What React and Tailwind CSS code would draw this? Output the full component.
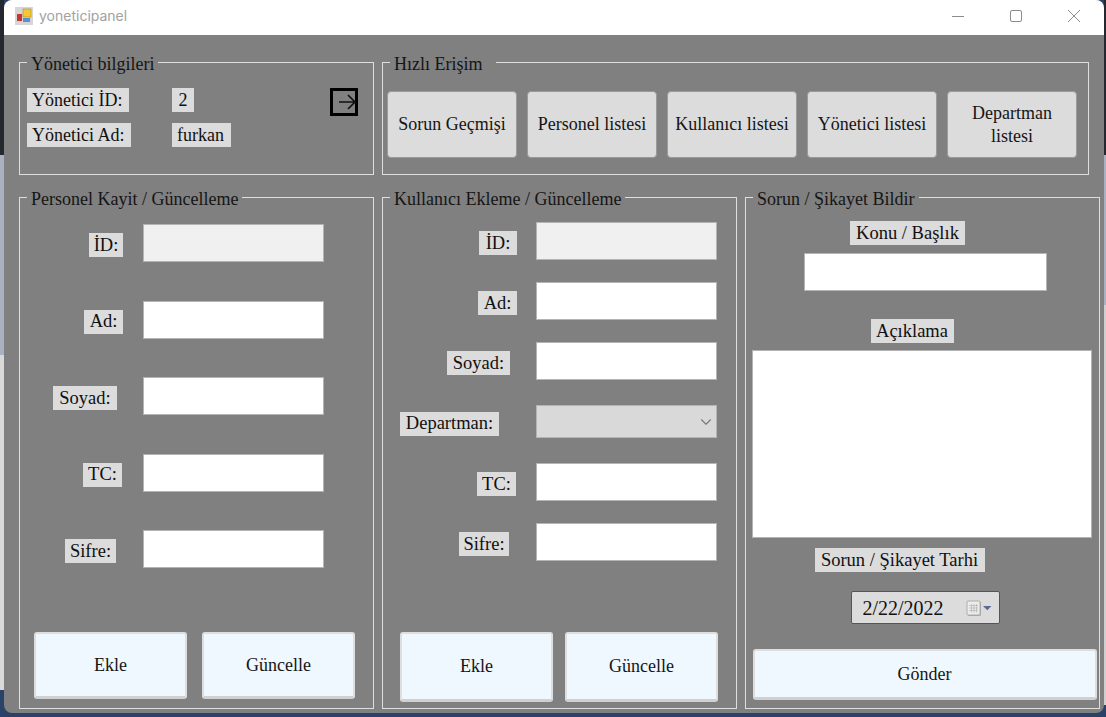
import { ChevronDown } from "lucide-react";

const serif = "font-['Liberation_Serif',serif]";

function Tag({ children, className = "", size = "text-[18px]" }) {
  return <span className={`inline-flex h-6 shrink-0 items-center whitespace-nowrap bg-[#dcdcdc] px-[5px] leading-none text-[#101010] ${size} ${className}`}>{children}</span>;
}

function Field({ className = "", gray }) {
  return <div className={`h-[38px] border border-[#b4b4b4] ${gray ? "bg-[#f0f0f0]" : "bg-white"} ${className}`} />;
}

function Group({ title, className = "", legendClass = "pr-[4px]", children }) {
  return (
    <fieldset className={`min-w-0 shrink-0 border border-[#dedede] ${className}`}>
      <legend className={`ml-[7px] h-[22px] pl-[4px] text-[18px] leading-[26px] text-[#151515] ${legendClass}`}>{title}</legend>
      {children}
    </fieldset>
  );
}

function BigButton({ children, className = "" }) {
  return <button className={`rounded-[3px] border-2 border-b-[3px] border-[#dedede] border-b-[#d0d0d0] bg-[#eff7ff] text-[18px] text-[#151515] ${className}`}>{children}</button>;
}

function QuickButton({ children }) {
  return <button className="h-[67px] w-[130px] rounded-[4px] border border-[#9a9a9a] bg-[#dcdcdc] px-1 text-[18px] leading-[23px] text-[#151515]">{children}</button>;
}

function FormRow({ label, labelW, pr, tagW, children, className = "" }) {
  return (
    <div className={`flex items-center ${className}`}>
      <div className={`flex shrink-0 justify-end pt-[4px] ${labelW} ${pr}`}>
        <Tag size="text-[18.5px]" className={`justify-center !px-0 ${tagW}`}>{label}</Tag>
      </div>
      {children}
    </div>
  );
}

export default function App() {
  const personel = [
    ["İD:", "pr-[20px]", "w-[34px]"],
    ["Ad:", "pr-[20px]", "w-[39px]"],
    ["Soyad:", "pr-[26px]", "w-[64px]"],
    ["TC:", "pr-[21px]", "w-[39px]"],
    ["Sifre:", "pr-[27px]", "w-[51px]"],
  ];
  return (
    <div className={`flex h-[717px] w-[1106px] overflow-hidden bg-[#2b4268] ${serif}`}>
      {/* desktop behind the window, left edge */}
      <div className="flex w-[4px] shrink-0 flex-col">
        <div className="h-[155px] bg-[#26282f]" />
        <div className="h-[200px] bg-[#aab2c2]" />
        <div className="h-[335px] bg-[#d9d9d9]" />
      </div>

      <div className="flex h-[713px] w-[1100px] shrink-0 flex-col overflow-hidden rounded-[8px] bg-[#808080]">
        {/* title bar */}
        <div className="flex h-[35px] shrink-0 items-center bg-white pb-[4px] font-['Inter',sans-serif]">
          <svg width="18" height="18" viewBox="0 0 18 18" className="ml-[11px]">
            <rect width="18" height="18" fill="#d6d6d6" />
            <rect x="8" y="2" width="8" height="8" fill="#f6c838" stroke="#b98a1a" strokeWidth="0.6" />
            <rect x="2" y="7" width="5" height="7" fill="#c9342c" />
            <rect x="8" y="11" width="7" height="4" fill="#5a8fd8" />
          </svg>
          <span className="ml-[6px] text-[14px] text-[#a2a2a2]">yoneticipanel</span>
          <div className="ml-auto flex items-center gap-[46px] pr-[24px]">
            <svg width="12" height="12" viewBox="0 0 12 12"><path d="M0 6.5h12" stroke="#8c8c8c" /></svg>
            <svg width="12" height="12" viewBox="0 0 12 12"><rect x="0.5" y="0.5" width="11" height="11" rx="1.5" fill="none" stroke="#8c8c8c" /></svg>
            <svg width="12" height="12" viewBox="0 0 12 12"><path d="M0 0l12 12M12 0L0 12" stroke="#8c8c8c" /></svg>
          </div>
        </div>

        <div className="flex flex-col pl-[15px]">
          {/* top row */}
          <div className="mt-[16px] flex gap-[8px]">
            <Group title="Yönetici bilgileri" className="h-[124px] w-[355px]">
              <div className="relative px-[7px] pt-[15px]">
                <div className="flex h-6 items-center">
                  <Tag className="w-[102px]">Yönetici İD:</Tag>
                  <Tag className="ml-[43px] w-[22px] justify-center">2</Tag>
                </div>
                <div className="mt-[11px] flex h-6 items-center">
                  <Tag className="w-[104px]">Yönetici Ad:</Tag>
                  <Tag className="ml-[41px] w-[59px]">furkan</Tag>
                </div>
                <svg width="28" height="28" viewBox="0 0 28 28" className="absolute left-[310px] top-[15px]" fill="none">
                  <rect x="1.5" y="1.5" width="25" height="25" stroke="#000" strokeWidth="3" />
                  <path d="M9 14h16M18 7l7 7-7 7" stroke="#111" strokeWidth="1.7" />
                </svg>
              </div>
            </Group>
            <Group title="Hızlı Erişim" legendClass="pr-[13px]" className="h-[124px] w-[707px]">
              <div className="flex gap-[10px] pl-[4px] pt-[18px]">
                <QuickButton>Sorun Geçmişi</QuickButton>
                <QuickButton>Personel listesi</QuickButton>
                <QuickButton>Kullanıcı listesi</QuickButton>
                <QuickButton>Yönetici listesi</QuickButton>
                <QuickButton>Departman<br />listesi</QuickButton>
              </div>
            </Group>
          </div>

          {/* bottom row */}
          <div className="mt-[11px] flex gap-[8px]">
            <Group title="Personel Kayit / Güncelleme" className="h-[523px] w-[355px]">
              <div className="flex flex-col gap-[38.5px] pt-[16px]">
                {personel.map(([label, pr, tagW]) => (
                  <FormRow key={label} label={label} labelW="w-[123px]" pr={pr} tagW={tagW}>
                    <Field className="w-[181px]" gray={label === "İD:"} />
                  </FormRow>
                ))}
              </div>
              <div className="mt-[64px] flex gap-[15px] pl-[14px]">
                <BigButton className="h-[67px] w-[153px]">Ekle</BigButton>
                <BigButton className="h-[67px] w-[153px]">Güncelle</BigButton>
              </div>
            </Group>

            <Group title="Kullanıcı Ekleme / Güncelleme" className="h-[523px] w-[355px]">
              <div className="flex flex-col pt-[14px]">
                <FormRow label="İD:" labelW="w-[153px]" pr="pr-[19px]" tagW="w-[38px]"><Field className="w-[181px]" gray /></FormRow>
                <FormRow label="Ad:" labelW="w-[153px]" pr="pr-[19px]" tagW="w-[39px]" className="mt-[22px]"><Field className="w-[181px]" /></FormRow>
                <FormRow label="Soyad:" labelW="w-[153px]" pr="pr-[26px]" tagW="w-[63px]" className="mt-[22px]"><Field className="w-[181px]" /></FormRow>
                <FormRow label="Departman:" labelW="w-[153px]" pr="pr-[37px]" tagW="w-[99px]" className="mt-[25px]">
                  <div className="flex h-[33px] w-[181px] items-center justify-end border border-[#b4b4b4] bg-[#d9d9d9] pr-[1px] text-[#7a7a7a]">
                    <ChevronDown size={18} strokeWidth={1.5} />
                  </div>
                </FormRow>
                <FormRow label="TC:" labelW="w-[153px]" pr="pr-[20px]" tagW="w-[39px]" className="mt-[25px]"><Field className="w-[181px]" /></FormRow>
                <FormRow label="Sifre:" labelW="w-[153px]" pr="pr-[27px]" tagW="w-[50px]" className="mt-[22px]"><Field className="w-[181px]" /></FormRow>
              </div>
              <div className="mt-[71px] flex gap-[12px] pl-[17px]">
                <BigButton className="h-[70px] w-[153px]">Ekle</BigButton>
                <BigButton className="h-[70px] w-[153px]">Güncelle</BigButton>
              </div>
            </Group>

            <Group title="Sorun / Şikayet Bildir" className="h-[523px] w-[355px]">
              <div className="flex flex-col items-center pr-[2px] pt-[13px]">
                <Tag size="text-[18.5px]" className="ml-[-28px] w-[115px] justify-center">Konu / Başlık</Tag>
                <Field className="ml-[7px] mt-[8px] w-[243px]" />
                <Tag size="text-[18.5px]" className="ml-[-19px] mt-[28px] w-[83px] justify-center">Açıklama</Tag>
                <div className="mt-[7px] h-[188px] w-[340px] border border-[#b4b4b4] bg-white" />
                <Tag size="text-[18.5px]" className="ml-[-44px] mt-[10px] w-[170px] justify-center">Sorun / Şikayet Tarhi</Tag>
                <div className="ml-[7px] mt-[19px] flex h-[33px] w-[149px] items-center rounded-[2px] border border-[#555] bg-[#dcdcdc] pl-[11px] text-[20px] text-[#111]">
                  2/22/2022
                  <svg width="26" height="16" viewBox="0 0 26 16" className="ml-[22px]">
                    <rect x="2" y="2" width="13" height="14" rx="1" fill="#b0b0b0" />
                    <rect x="1" y="1" width="13" height="14" rx="1" fill="#ececec" stroke="#a0a0a0" strokeWidth="0.8" />
                    <path d="M3 5.5h9M3 8h9M3 10.5h9M5.5 4v8.5M8 4v8.5M10.5 4v8.5" stroke="#b5b5b5" strokeWidth="0.7" />
                    <path d="M17 6h8.5l-4.2 4.2z" fill="#5b6b92" />
                  </svg>
                </div>
                <BigButton className="ml-[6px] mt-[25px] h-[51px] w-[344px]">Gönder</BigButton>
              </div>
            </Group>
          </div>
        </div>
      </div>

      {/* desktop behind the window, right edge */}
      <div className="flex w-[2px] shrink-0 flex-col">
        <div className="h-[155px] bg-[#26282f]" />
        <div className="h-[150px] bg-[#aab2c2]" />
        <div className="h-[400px] bg-[#cfcfcf]" />
      </div>
    </div>
  );
}
